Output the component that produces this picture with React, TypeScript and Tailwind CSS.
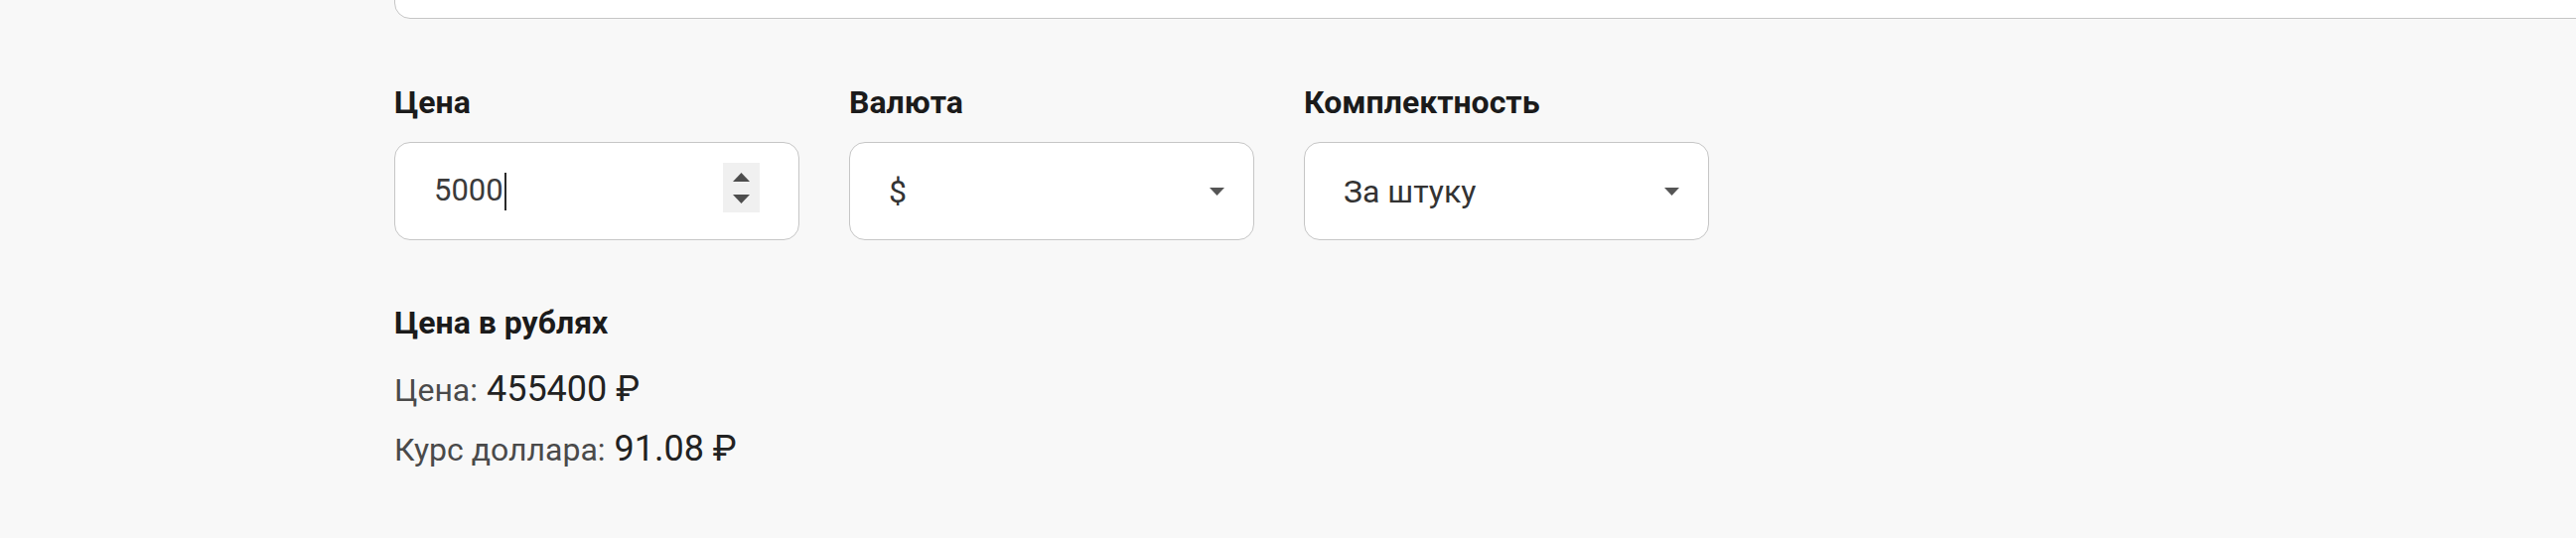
import type { ReactNode } from "react";

const fieldBox = "h-[99px] w-[408px] rounded-[16px] border border-[#c6c6c6] bg-white";

function FieldLabel({ children }: { children: ReactNode }) {
  return <p className="mb-[21px] text-[32px] font-bold leading-[38px] text-[#1b1b1b]">{children}</p>;
}

function DropArrow() {
  return (
    <svg className="h-[8px] w-[15px]" viewBox="0 0 15 8">
      <path d="M0 0h15L7.5 8z" fill="#555" />
    </svg>
  );
}

function NumberField({ value }: { value: string }) {
  return (
    <div className={`${fieldBox} flex items-center justify-between pl-[39px] pr-[39px]`}>
      <div className="flex items-center text-[31px] text-[#3b3b3b]">
        <span>{value}</span>
        <span className="ml-[1px] h-[38px] w-[2px] bg-[#2a2a2a]" />
      </div>
      <div className="mb-[7px] flex h-[50px] w-[37px] flex-col items-center justify-center gap-[13px] bg-[#f0f0f0]">
        <svg className="h-[9px] w-[17px]" viewBox="0 0 17 9">
          <path d="M8.5 0L17 9H0z" fill="#4d4d4d" />
        </svg>
        <svg className="h-[9px] w-[17px]" viewBox="0 0 17 9">
          <path d="M0 0h17L8.5 9z" fill="#4d4d4d" />
        </svg>
      </div>
    </div>
  );
}

function SelectField({ value }: { value: string }) {
  return (
    <div className={`${fieldBox} flex items-center justify-between pl-[39px] pr-[29px]`}>
      <span className="text-[32px] text-[#333]">{value}</span>
      <DropArrow />
    </div>
  );
}

export default function App() {
  return (
    <div className="h-[542px] w-full overflow-hidden bg-[#f8f8f8] font-['Roboto',sans-serif]">
      <div className="pl-[397px]">
        <div className="-mt-[41px] h-[60px] w-[2400px] rounded-[16px] border border-[#c6c6c6] bg-white" />

        <div className="mt-[65px] flex gap-[50px]">
          <div>
            <FieldLabel>Цена</FieldLabel>
            <NumberField value="5000" />
          </div>
          <div>
            <FieldLabel>Валюта</FieldLabel>
            <SelectField value="$" />
          </div>
          <div>
            <FieldLabel>Комплектность</FieldLabel>
            <SelectField value="За штуку" />
          </div>
        </div>

        <div className="mt-[64px]">
          <p className="mb-[19px] text-[32px] font-bold leading-[38px] text-[#1b1b1b]">Цена в рублях</p>
          <div className="text-[36px] leading-[59px] text-[#222]">
            <span className="text-[32px] text-[#4a4a4a]">Цена:</span> 455400 ₽
          </div>
          <div className="text-[36px] leading-[59px] text-[#222]">
            <span className="text-[32px] text-[#4a4a4a]">Курс доллара:</span> 91.08 ₽
          </div>
        </div>
      </div>
    </div>
  );
}
